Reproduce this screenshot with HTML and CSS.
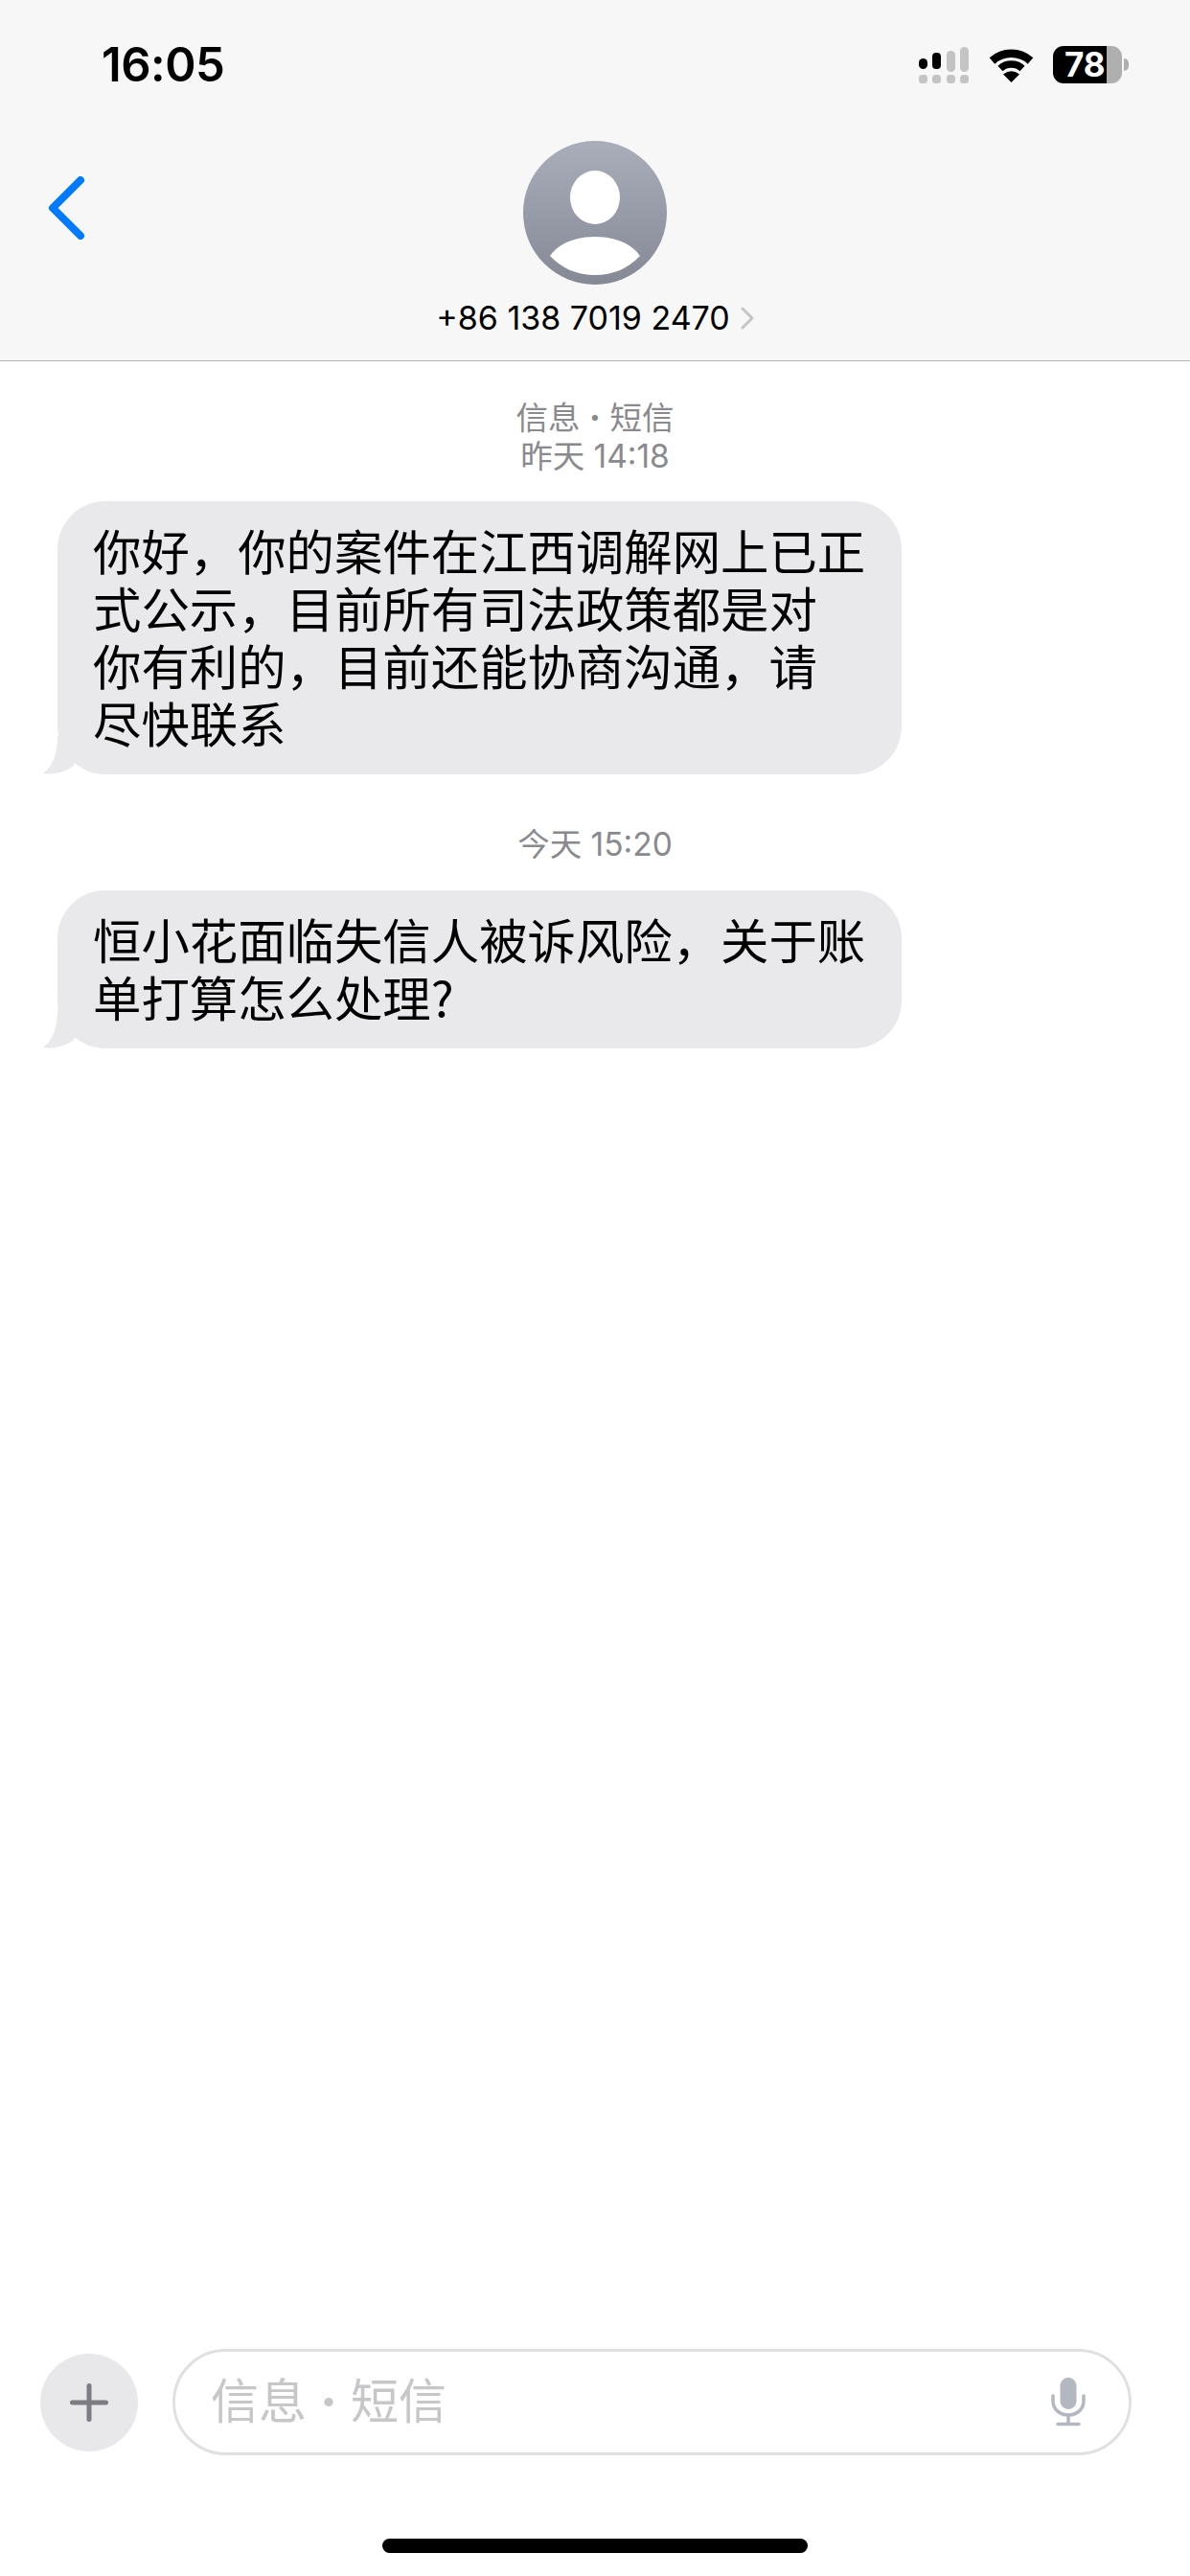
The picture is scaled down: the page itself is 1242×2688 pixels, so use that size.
FILE: index.html
```html
<!DOCTYPE html>
<html lang="zh-CN">
<head>
<meta charset="utf-8">
<title>信息</title>
<link rel="stylesheet" href="styles.css">
</head>
<body>
<div class="page">
  <header class="header">
    <div class="status">
      <span class="time">16:05</span>
      <div class="status-icons">
        <svg class="signal" width="52" height="38" viewBox="0 0 52 38">
          <rect x="0" y="12" width="9" height="11" rx="4.5" fill="#000"/>
          <rect x="14" y="9" width="9" height="17" rx="4" fill="#000" transform="translate(0 -3)"/>
          <rect x="29" y="4" width="9" height="22" rx="4.5" fill="#c4c4c4"/>
          <rect x="43" y="0" width="9" height="26" rx="4.5" fill="#c4c4c4"/>
          <rect x="0" y="29" width="9" height="9" rx="3.5" fill="#c4c4c4"/>
          <rect x="14" y="29" width="9" height="9" rx="3.5" fill="#c4c4c4"/>
          <rect x="29" y="29" width="9" height="9" rx="3.5" fill="#c4c4c4"/>
          <rect x="43" y="29" width="9" height="9" rx="3.5" fill="#c4c4c4"/>
        </svg>
        <svg class="wifi" width="47" height="38" viewBox="0 0 47 38">
          <path d="M3.5 14.5 A30 30 0 0 1 43.5 14.5" fill="none" stroke="#000" stroke-width="8.5"/>
          <path d="M12 22.5 A17 17 0 0 1 35 22.5" fill="none" stroke="#000" stroke-width="7.5"/>
          <path d="M23.5 37 L15 28.5 Q23.5 22 32 28.5 Z" fill="#000"/>
        </svg>
        <div class="battery">78</div>
      </div>
    </div>
    <div class="nav">
      <svg class="back" width="40" height="66" viewBox="0 0 40 66">
        <path d="M34 4 L5 33 L34 62" fill="none" stroke="#007aff" stroke-width="8" stroke-linecap="round" stroke-linejoin="round"/>
      </svg>
      <svg class="avatar" width="150" height="150" viewBox="0 0 150 150">
        <defs>
          <linearGradient id="avatarGrad" x1="0" y1="0" x2="0" y2="1">
            <stop offset="0" stop-color="#aaaeba"/>
            <stop offset="1" stop-color="#858995"/>
          </linearGradient>
        </defs>
        <circle cx="75" cy="75" r="75" fill="url(#avatarGrad)"/>
        <ellipse cx="75" cy="59" rx="26" ry="28" fill="#fff"/>
        <path d="M28 120 C38 106 56 100 75 100 C94 100 112 106 122 120 C110 133 94 140 75 140 C56 140 40 133 28 120 Z" fill="#fff"/>
      </svg>
      <div class="contact">
        <span class="phone">+86 138 7019 2470</span>
        <svg class="disclosure" width="14" height="24" viewBox="0 0 14 24">
          <path d="M2 2 L12 12 L2 22" fill="none" stroke="#c5c5c7" stroke-width="3" stroke-linecap="round" stroke-linejoin="round"/>
        </svg>
      </div>
    </div>
  </header>

  <main class="thread">
    <div class="stamp stamp-first">信息<span class="stamp-dot">·</span>短信<br>昨天 14:18</div>
    <div class="bubble">
      你好&#xFF0C;你的案件在江西调解网上已正<br>式公示&#xFF0C;目前所有司法政策都是对<br>你有利的&#xFF0C;目前还能协商沟通&#xFF0C;请<br>尽快联系
      <svg class="tail" width="50" height="40" viewBox="0 0 50 40">
        <path d="M15 0 C15 18 10 32 0 39 C13 41 24 37 32 31 L45 0 Z" fill="#e9e9eb"/>
      </svg>
    </div>
    <div class="stamp stamp-next">今天 15:20</div>
    <div class="bubble">
      恒小花面临失信人被诉风险&#xFF0C;关于账<br>单打算怎么处理?
      <svg class="tail" width="50" height="40" viewBox="0 0 50 40">
        <path d="M15 0 C15 18 10 32 0 39 C13 41 24 37 32 31 L45 0 Z" fill="#e9e9eb"/>
      </svg>
    </div>
  </main>

  <div class="composer">
    <div class="plus">
      <svg width="40" height="40" viewBox="0 0 40 40">
        <path d="M20 2.500 V37.500 M2.500 20 H37.500" fill="none" stroke="#7c7c82" stroke-width="5" stroke-linecap="round"/>
      </svg>
    </div>
    <div class="field">
      <span class="placeholder">信息<span class="dot">·</span>短信</span>
      <svg class="mic" width="36" height="51" viewBox="0 0 36 51">
        <rect x="9.500" y="0" width="17" height="33" rx="8.500" fill="#b3b7c0"/>
        <path d="M2 19 V24 C2 33 9 39 18 39 C27 39 34 33 34 24 V19" fill="none" stroke="#b3b7c0" stroke-width="3.500" stroke-linecap="round"/>
        <path d="M18 39 V48 M7 48.500 H29" fill="none" stroke="#b3b7c0" stroke-width="3.500" stroke-linecap="round"/>
      </svg>
    </div>
  </div>

  <div class="home-area"><div class="home-bar"></div></div>
</div>
</body>
</html>
```

FILE: styles.css
```css
* {
  box-sizing: border-box;
}

html,
body {
  margin: 0;
  padding: 0;
  background: #fff;
}

body {
  font-family: "Inter", "Noto Sans CJK SC", sans-serif;
  color: #000;
}

.page {
  width: 1242px;
  height: 2688px;
  display: flex;
  flex-direction: column;
  overflow: hidden;
}

.header {
  height: 377px;
  flex: none;
  background: #f7f7f7;
  border-bottom: 1px solid #b4b4b4;
}

.status {
  height: 39px;
  margin-top: 48px;
  padding: 0 64px 0 106px;
  display: flex;
  justify-content: space-between;
  align-items: center;
}

.time {
  font-size: 49px;
  font-weight: 600;
  line-height: 39px;
  letter-spacing: -0.5px;
}

.status-icons {
  display: flex;
  align-items: center;
}

.signal {
  margin-right: 21px;
}

.wifi {
  margin-right: 20px;
}

.battery {
  position: relative;
  width: 72px;
  height: 39px;
  margin-right: 7px;
  border-radius: 11px;
  background: linear-gradient(90deg, #000 56px, #afafaf 56px);
  color: #fff;
  font-size: 35px;
  font-weight: 700;
  line-height: 39px;
  padding-left: 12px;
  white-space: nowrap;
}

.battery::after {
  content: "";
  position: absolute;
  right: -7px;
  top: 13px;
  width: 5px;
  height: 13px;
  border-radius: 0 6px 6px 0;
  background: #afafaf;
}

.nav {
  position: relative;
  display: flex;
  flex-direction: column;
  align-items: center;
  padding-top: 60px;
}

.back {
  position: absolute;
  left: 50px;
  top: 97px;
}

.contact {
  display: flex;
  align-items: center;
  gap: 11px;
  margin-top: 15px;
}

.phone {
  font-size: 34px;
  line-height: 40px;
  white-space: nowrap;
}

.thread {
  flex: 1;
  display: flex;
  flex-direction: column;
  align-items: flex-start;
}

.stamp {
  width: 100%;
  text-align: center;
  color: #8a8a8e;
  font-size: 33.5px;
  line-height: 40px;
}

.stamp-dot {
  display: inline-block;
  width: 31px;
  text-align: center;
  font-weight: 800;
}

.stamp-first {
  margin-top: 39px;
  margin-bottom: 27px;
}

.stamp-next {
  margin-top: 53px;
  margin-bottom: 28px;
}

.bubble {
  position: relative;
  width: 881px;
  margin-left: 60px;
  padding: 21px 0 24px 37px;
  border-radius: 50px;
  background: #e9e9eb;
  font-family: "Noto Sans CJK SC", sans-serif;
  font-size: 50.4px;
  line-height: 60px;
  white-space: nowrap;
}

.tail {
  position: absolute;
  left: -15px;
  bottom: 0;
}

.composer {
  flex: none;
  display: flex;
  align-items: center;
  gap: 36px;
  padding: 0 61px 0 42px;
}

.plus {
  flex: none;
  width: 102px;
  height: 102px;
  border-radius: 50%;
  background: #e8e8ea;
  display: flex;
  align-items: center;
  justify-content: center;
}

.field {
  flex: 1;
  height: 111px;
  padding: 0 45px 0 37px;
  border: 3px solid #e0e0e2;
  border-radius: 56px;
  background: #fff;
  display: flex;
  align-items: center;
  justify-content: space-between;
}

.placeholder {
  color: #c7c7c9;
  font-size: 50px;
  line-height: 60px;
  margin-top: -2px;
  white-space: nowrap;
}

.dot {
  display: inline-block;
  width: 46px;
  text-align: center;
  font-weight: 800;
}

.home-area {
  flex: none;
  height: 126px;
  padding-top: 87px;
  display: flex;
  justify-content: center;
}

.home-bar {
  width: 444px;
  height: 15px;
  border-radius: 8px;
  background: #000;
}
```
